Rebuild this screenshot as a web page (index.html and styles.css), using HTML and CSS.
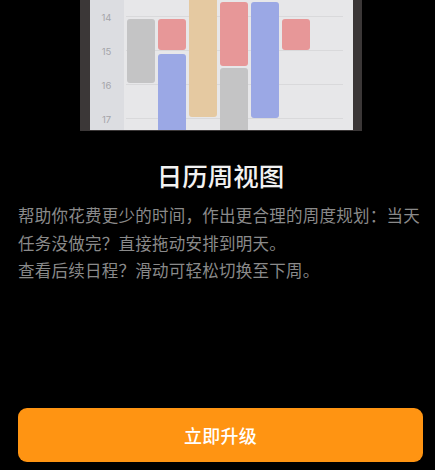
FILE: index.html
```html
<!DOCTYPE html>
<html lang="zh-CN">
<head>
<meta charset="utf-8">
<title>日历周视图</title>
<link rel="stylesheet" href="styles.css">
</head>
<body>
<main class="page">
  <div class="phone-wrap">
    <div class="phone">
      <div class="screen">
        <div class="hours">
          <span class="hour">14</span>
          <span class="hour">15</span>
          <span class="hour">16</span>
          <span class="hour">17</span>
        </div>
        <div class="days">
          <div class="day">
            <div class="event gray" style="top:19px;height:64px"></div>
          </div>
          <div class="day">
            <div class="event red" style="top:19px;height:31px"></div>
            <div class="event blue" style="top:54px;height:120px"></div>
          </div>
          <div class="day">
            <div class="event tan" style="top:-49px;height:166px"></div>
          </div>
          <div class="day">
            <div class="event red" style="top:2px;height:64px"></div>
            <div class="event gray" style="top:68px;height:120px"></div>
          </div>
          <div class="day">
            <div class="event blue" style="top:2px;height:116px"></div>
          </div>
          <div class="day">
            <div class="event red" style="top:19px;height:31px"></div>
          </div>
          <div class="day"></div>
        </div>
      </div>
    </div>
  </div>
  <h1 class="title">日历周视图</h1>
  <div class="desc">
    <p class="line">帮助你花费更少的时间，作出更合理的周度规划：当天任务没做完？直接拖动安排到明天。</p>
    <p class="line">查看后续日程？滑动可轻松切换至下周。</p>
  </div>
  <button class="cta" type="button">立即升级</button>
</main>
</body>
</html>
```

FILE: styles.css
```css
html, body {
  margin: 0;
  padding: 0;
  background: #000;
}

.page {
  box-sizing: border-box;
  height: 470px;
  padding: 0 12px 8px 18px;
  display: flex;
  flex-direction: column;
  font-family: "Noto Sans CJK SC", "Noto Sans", sans-serif;
}

.phone-wrap {
  display: flex;
  justify-content: center;
}

.phone {
  width: 263px;
  height: 130px;
  background: #3b3737;
  border-left: 10px solid #3b3737;
  border-right: 9px solid #3b3737;
  border-bottom: 1px solid #3b3737;
}

.screen {
  height: 130px;
  display: flex;
  overflow: hidden;
  background: #e7e7e9;
}

.hours {
  width: 34px;
  flex: none;
  background: #dcdde1;
  display: flex;
  flex-direction: column;
  padding-top: 1px;
}

.hour {
  height: 34px;
  line-height: 34px;
  flex: none;
  text-align: center;
  font-family: "Inter", "Roboto", sans-serif;
  font-size: 9.5px;
  color: #a4a4a9;
}

.days {
  flex: 1;
  display: grid;
  grid-template-columns: repeat(7, 31px);
  margin: 0 10px 0 2px;
  background: repeating-linear-gradient(to bottom,
    transparent 0, transparent 16px,
    #d9d9db 16px, #d9d9db 17px,
    transparent 17px, transparent 34px);
}

.day {
  position: relative;
}

.event {
  position: absolute;
  left: 1px;
  right: 2px;
  border-radius: 3px;
}

.gray { background: #c4c4c5; }
.red { background: #e79798; }
.blue { background: #9ba8e5; }
.tan { background: #e5c9a1; }

.title {
  margin: 29px 0 0;
  text-align: center;
  font-size: 25.5px;
  line-height: 30px;
  font-weight: 500;
  color: #f2f2f2;
}

.desc {
  margin-top: 12px;
}

.line {
  margin: 0;
  font-size: 16.5px;
  letter-spacing: 0.25px;
  line-height: 27.7px;
  color: #8a8a8a;
}

.cta {
  margin-top: auto;
  height: 54px;
  border: none;
  border-radius: 9px;
  background: #ff9412;
  color: #fff;
  font-family: "Noto Sans CJK SC", "Noto Sans", sans-serif;
  font-size: 18px;
  font-weight: 500;
  letter-spacing: 0.3px;
}
```
